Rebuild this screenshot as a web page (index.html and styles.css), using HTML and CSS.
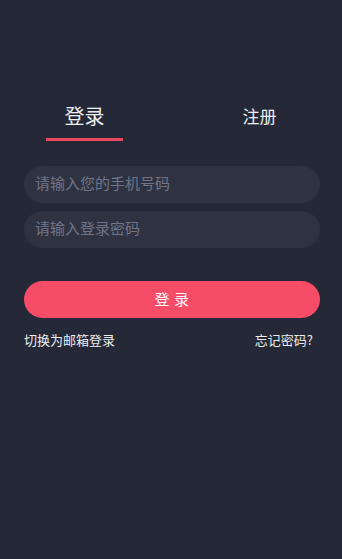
FILE: index.html
```html
<!DOCTYPE html>
<html lang="zh-CN">
<head>
<meta charset="utf-8">
<meta name="viewport" content="width=device-width, initial-scale=1">
<title>登录</title>
<link rel="stylesheet" href="styles.css">
</head>
<body>
<div class="page">
  <div class="tabs">
    <div class="tab tab-active">登录</div>
    <div class="tab">注册</div>
  </div>
  <form class="form">
    <div class="field"><input class="input" type="text" placeholder="请输入您的手机号码"></div>
    <div class="field"><input class="input" type="password" placeholder="请输入登录密码"></div>
    <button class="btn" type="button">登 录</button>
    <div class="links">
      <span class="link">切换为邮箱登录</span>
      <span class="link">忘记密码?</span>
    </div>
  </form>
</div>
</body>
</html>
```

FILE: styles.css
```css
* { box-sizing: border-box; }
html, body {
  margin: 0;
  padding: 0;
  height: 100%;
  background: #252937;
}
body {
  font-family: "Noto Sans CJK SC", "Noto Sans", sans-serif;
  color: #e8e9ec;
}
.page {
  padding-top: 102px;
}
.tabs {
  display: flex;
  align-items: flex-start;
  padding-left: 46px;
  gap: 98px;
}
.tab {
  width: 77px;
  height: 39px;
  line-height: 28px;
  text-align: center;
  font-size: 17px;
  color: #eceef1;
}
.tab-active {
  font-size: 20px;
  border-bottom: 3px solid #e9465f;
}
.form {
  display: flex;
  flex-direction: column;
  padding: 25px 22px 0 24px;
}
.field {
  margin-bottom: 8px;
}
.input {
  display: block;
  width: 100%;
  height: 37px;
  border: none;
  outline: none;
  border-radius: 19px;
  background: #2f3341;
  padding: 0 11px 4px 11px;
  font-family: inherit;
  font-size: 15px;
  color: #e8e9ec;
}
.input::placeholder {
  color: #6f7487;
}
.btn {
  margin-top: 25px;
  height: 37px;
  border: none;
  border-radius: 19px;
  background: #f74c67;
  color: #fff;
  font-family: inherit;
  font-size: 15px;
  letter-spacing: 0.5px;
  padding: 0 0 2px 0;
}
.links {
  display: flex;
  justify-content: space-between;
  margin-top: 12px;
  padding-right: 7px;
  font-size: 13px;
  line-height: 20px;
  color: #eceef1;
}
```
